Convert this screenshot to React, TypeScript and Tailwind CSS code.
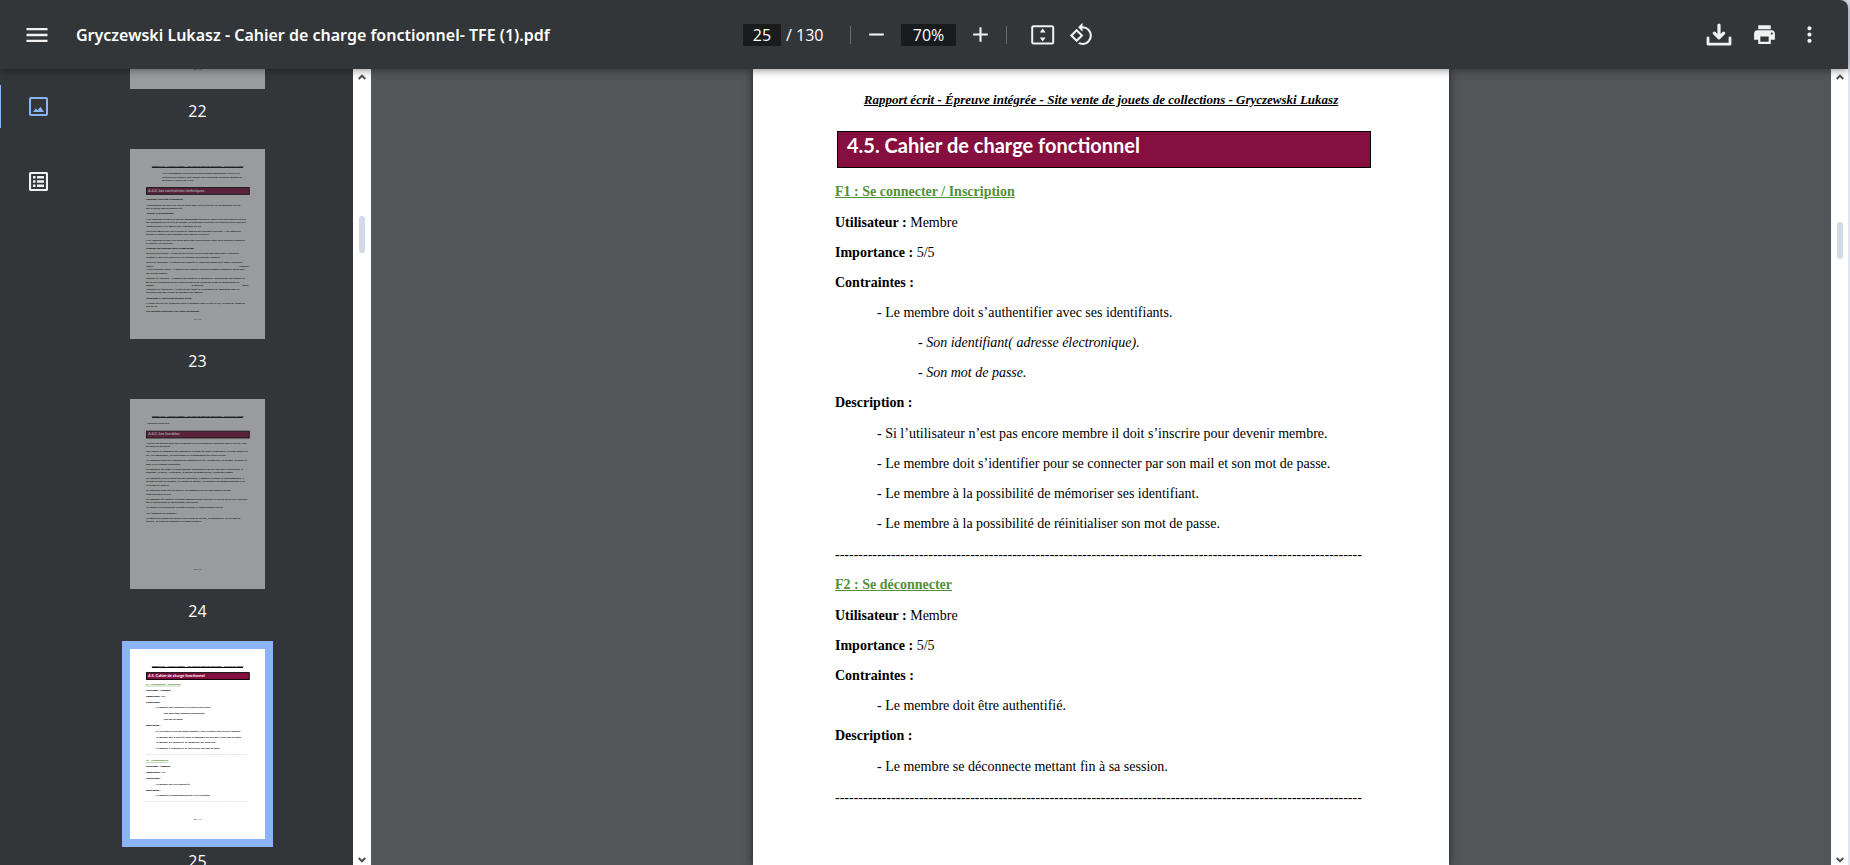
import { MdAdd, MdMenu, MdMoreVert, MdPrint, MdRemove, MdRotate90DegreesCcw } from "react-icons/md";

const RUNNING_HEAD = "Rapport écrit - Épreuve intégrée - Site vente de jouets de collections - Gryczewski Lukasz";
const RULE = "-".repeat(113);

type Feature = {
  title: string;
  constraints: string[];
  details: string[];
  description: string[];
};

const FEATURES: Feature[] = [
  {
    title: "F1 : Se connecter / Inscription",
    constraints: ["- Le membre doit s’authentifier avec ses identifiants."],
    details: ["- Son identifiant( adresse électronique).", "- Son mot de passe."],
    description: [
      "- Si l’utilisateur n’est pas encore membre il doit s’inscrire pour devenir membre.",
      "- Le membre doit s’identifier pour se connecter par son mail et son mot de passe.",
      "- Le membre à la possibilité de mémoriser ses identifiant.",
      "- Le membre à la possibilité de réinitialiser son mot de passe.",
    ],
  },
  {
    title: "F2 : Se déconnecter",
    constraints: ["- Le membre doit être authentifié."],
    details: [],
    description: ["- Le membre se déconnecte mettant fin à sa session."],
  },
];

/* A line of a page preview: x, y, text and an optional style, in page units. */
type Style = "bold" | "green" | "italic" | "end" | "middle";
type Line = [number, number, string, Style?];
type Preview = { number: number; heading?: string; headingY?: number; lines: Line[] };

const PREVIEWS: Preview[] = [
  { number: 22, lines: [] },
  {
    number: 23,
    heading: "4.4.2. Les contraintes techniques",
    headingY: 198,
    lines: [
      [165, 130, "Il est recommandé d'avoir des directives claires concernant la taille et la"],
      [165, 150, "résolution des images, pour garantir une expérience utilisateur optimale et"],
      [165, 166, "uniformité visuelle sur le site."],
      [82, 264, "Héberger votre site e-commerce.", "bold"],
      [82, 294, "L'hébergement de notre site web se trouve chez Infinityfree qui est un hébergeur de site"],
      [82, 310, "php avec une base de données sql."],
      [82, 336, "Assurer la maintenance.", "bold"],
      [82, 366, "Il est important d'établir un plan de maintenance préventive pour éviter pour pouvoir prévoir"],
      [82, 382, "des inspections du site afin de détecter les problèmes avant qu'elles surgissent c'est pour cela"],
      [82, 401, "l'administrateur à un accès à tout l'ensemble du site."],
      [82, 428, "Une planification des interventions en fonction des urgences et criticité. Il est important"],
      [82, 444, "d'établir les critères des problèmes pour pouvoir les régler."],
      [82, 475, "Il est important d'établir des délais clairs pour notre clientèle pour qu'ils puissent s'organiser"],
      [82, 490, "et planifier leur planning."],
      [82, 516, "Proposer des solutions pour le dépannage.", "bold"],
      [82, 542, "Délais d'intervention : Le contrat doit définir un délai maximal dans lequel l'entreprise"],
      [82, 562, "s'engage à intervenir après avoir été informée du problème rencontré."],
      [82, 588, "Délais de réparation : Le contrat doit spécifier le temps maximum dans lequel l'entreprise"],
      [82, 608, "réparer"],
      [614, 608, "l'incident.", "end"],
      [82, 624, "Types d'incident inclus : Le contrat peut spécifier un certain nombre d'incidents inclus dans"],
      [82, 644, "une période donnée."],
      [82, 670, "Montant de l'astreinte : Le contrat doit spécifier le montant de l'astreinte que sera facturé en"],
      [82, 690, "cas de non-respect des délais d'intervention ou de réparation en cas de dépassement du"],
      [82, 706, "nombre"],
      [348, 706, "d'incidents", "middle"],
      [614, 706, "inclus.", "end"],
      [82, 728, "Procédure de facturation : Le contrat doit spécifier la procédure de facturation pour les"],
      [82, 742, "astreintes ainsi que le délai de paiement des factures."],
      [82, 774, "Formation à l'utilisation du back-office.", "bold"],
      [82, 800, "Il faudra prévoir des formations pour le personnel pour utiliser le site, la durée de formation"],
      [82, 815, "sera de 2h."],
      [82, 841, "Les relations utilitaires avec votre site internet", "bold"],
    ],
  },
  {
    number: 24,
    heading: "4.4.3. Les livrables",
    headingY: 165,
    lines: [
      [86, 129, "Templates prédéfinis."],
      [82, 232, "Analyse des besoins détaillant les besoins et les exigences de l'entreprise pour le site de vente"],
      [82, 248, "de jouets de collection."],
      [82, 274, "Doit inclure un document des architecture système qui décrit l'architecture système globale du"],
      [82, 294, "site, les technologies, les plateformes et les composants qui seront utilisés."],
      [82, 320, "Un document détaillant la conception graphique du site, les couleurs, les polices, les mises en"],
      [82, 340, "page et les éléments graphiques."],
      [82, 366, "Un document qui décrit les spécifications fonctionnelles du site ainsi que la navigation, la"],
      [82, 382, "recherche, le panier, le paiement, la gestion de compte client, l'historique d'achat."],
      [82, 413, "Un document avec les spécifications techniques, y compris la langue de programmation, le"],
      [82, 428, "système de base de données, les normes de codage, les protocoles de communications et les"],
      [82, 449, "exigences de sécurité."],
      [82, 475, "Un document décrivant les plans et les procédures de test pour garantir un bon"],
      [82, 495, "fonctionnement du site."],
      [82, 521, "Un document qui spécifie les étapes nécessaires pour déployer le site sur un serveur web ainsi"],
      [82, 537, "que sa maintenance de maintenance, sauvegarde."],
      [82, 562, "Un manuel d'utilisation qui explique au client le fonctionnement du site."],
      [82, 593, "Une formation du personnel."],
      [82, 619, "Un contrat de support qui détaille les niveaux de service, les garanties et les services de"],
      [82, 634, "support, les délais de réponses et les coûts associés."],
    ],
  },
  {
    number: 25,
    heading: "4.5. Cahier de charge fonctionnel",
    headingY: 121,
    lines: [
      [82, 185, "F1 : Se connecter / Inscription", "green"],
      [82, 215, "Utilisateur : Membre", "bold"],
      [82, 246, "Importance : 5/5", "bold"],
      [82, 276, "Contraintes :", "bold"],
      [124, 305, FEATURES[0].constraints[0]],
      [166, 336, FEATURES[0].details[0], "italic"],
      [166, 366, FEATURES[0].details[1], "italic"],
      [82, 396, "Description :", "bold"],
      [124, 427, FEATURES[0].description[0]],
      [124, 457, FEATURES[0].description[1]],
      [124, 487, FEATURES[0].description[2]],
      [124, 518, FEATURES[0].description[3]],
      [82, 548, RULE],
      [82, 578, "F2 : Se déconnecter", "green"],
      [82, 609, "Utilisateur : Membre", "bold"],
      [82, 639, "Importance : 5/5", "bold"],
      [82, 669, "Contraintes :", "bold"],
      [124, 699, FEATURES[1].constraints[0]],
      [82, 730, "Description :", "bold"],
      [124, 760, FEATURES[1].description[0]],
      [82, 790, RULE],
    ],
  },
];

function PagePreview({ preview }: { preview: Preview }) {
  const { number, heading, headingY = 0, lines } = preview;
  return (
    <svg viewBox="0 0 696 980" className="block h-[190px] w-[135px] bg-white font-['Liberation_Serif',serif]" aria-hidden="true">
      {heading && (
        <>
          <text x="348" y="93" fontSize="13" fontWeight="700" fontStyle="italic" textAnchor="middle">{RUNNING_HEAD}</text>
          <rect x="113" y="93" width="470" height="5" />
          <rect x="85" y={headingY + 1} width="530" height="35" fill="#85103f" stroke="#000" strokeWidth="5" />
          <text x="94" y={headingY + 22} fontSize="20" fontWeight="700" fill="#fff" className="font-[Lato,sans-serif]">{heading}</text>
        </>
      )}
      {lines.map(([x, y, text, style]) => {
        const color = style === "green" ? "#548f36" : "#000";
        return (
          <text
            key={`${x}-${y}`}
            x={x}
            y={y}
            fontSize="14"
            fontWeight={style === "bold" || style === "green" ? 700 : 400}
            fontStyle={style === "italic" ? "italic" : "normal"}
            fill={color}
            stroke={color}
            strokeWidth={text === RULE ? 0 : 0.3}
            textDecoration={style === "green" ? "underline" : undefined}
            textAnchor={style === "end" ? "end" : style === "middle" ? "middle" : "start"}
          >
            {text}
          </text>
        );
      })}
      <text x="348" y="882" fontSize="14" textAnchor="middle">{number}/130</text>
    </svg>
  );
}

function Thumbnail({ preview, current }: { preview: Preview; current: boolean }) {
  return (
    <li className="flex h-[250px] shrink-0 flex-col items-center">
      <a href={`#page-${preview.number}`} aria-current={current ? "page" : undefined} className="flex flex-col items-center gap-[12px] text-white">
        <span className={current ? "outline-8 outline-[#8ab4f8]" : "opacity-50"}>
          <PagePreview preview={preview} />
        </span>
        <span className="text-[16px] leading-[20px]">{preview.number}</span>
      </a>
    </li>
  );
}

function Chevron({ down = false }: { down?: boolean }) {
  return (
    <svg viewBox="0 0 8 6" className="h-[6px] w-[8px]" fill="none" stroke="#505050" strokeWidth="2" aria-hidden="true">
      <path d={down ? "M.7 1 4 4.3 7.3 1" : "M.7 5 4 1.7 7.3 5"} />
    </svg>
  );
}

function Scrollbar({ wide = false }: { wide?: boolean }) {
  return (
    <div className={`flex shrink-0 flex-col items-center bg-white pt-[5px] pb-[2px] ${wide ? "w-[18px]" : "w-[17px]"}`}>
      <Chevron />
      <div className={`h-[37px] w-[6px] rounded-full bg-[#d0dbe5] ${wide ? "mt-[136px]" : "mt-[142px]"}`} />
      <div className="mt-auto">
        <Chevron down />
      </div>
    </div>
  );
}

function Toolbar() {
  return (
    <header className="relative z-10 grid h-[69px] shrink-0 grid-cols-[1fr_auto_1fr] items-center rounded-tr-lg bg-[#323639] text-[#f1f1f1] shadow-[0_1px_8px_rgba(0,0,0,0.45)]">
      <div className="flex items-center gap-[25px] pl-[23px]">
        <button type="button" aria-label="Menu"><MdMenu size={28} /></button>
        <h1 className="font-['Noto_Sans',sans-serif] text-[16px] leading-[24px] font-semibold whitespace-nowrap text-white">
          Gryczewski Lukasz - Cahier de charge fonctionnel- TFE (1).pdf
        </h1>
      </div>
      <div className="flex items-center pr-[11px] text-[16px] leading-[22px] text-white">
        <input aria-label="Page" defaultValue="25" className="h-[22px] w-[38px] bg-[#191b1c] text-center" />
        <span className="w-[69px] pl-[5px] whitespace-nowrap">/ 130</span>
        <span className="h-[18px] w-px bg-[#6b6e70]" />
        <button type="button" aria-label="Zoom arrière" className="ml-[13px] text-[#f1f1f1]"><MdRemove size={25} /></button>
        <input aria-label="Zoom" defaultValue="70%" className="ml-[12px] h-[22px] w-[55px] bg-[#191b1c] text-center" />
        <button type="button" aria-label="Zoom avant" className="ml-[12px] text-[#f1f1f1]"><MdAdd size={25} /></button>
        <span className="ml-[13px] h-[18px] w-px bg-[#6b6e70]" />
        <button type="button" aria-label="Ajuster à la page" className="ml-[24px]">
          <svg viewBox="0 0 24 20" className="h-[20px] w-[24px]" aria-hidden="true">
            <rect x="1.2" y="1.2" width="21" height="17.4" rx="1.4" fill="none" stroke="#f1f1f1" strokeWidth="2" />
            <path d="M11.7 3.6 14.6 7.6H8.8zM11.7 16.4 8.8 12.4h5.8z" fill="#f1f1f1" />
          </svg>
        </button>
        <button type="button" aria-label="Faire pivoter" className="ml-[14px] text-[#f1f1f1]"><MdRotate90DegreesCcw size={25} /></button>
      </div>
      <div className="flex items-center justify-end gap-[20px] pr-[26px]">
        <button type="button" aria-label="Télécharger">
          <svg viewBox="0 0 26 24" className="h-[24px] w-[26px]" fill="none" stroke="#f1f1f1" strokeLinecap="round" strokeLinejoin="round" aria-hidden="true">
            <path d="M13 2v12.500M8.300 10.200 13 14.900l4.700-4.700" strokeWidth="3.2" />
            <path d="M2 15v6.200h22V15" strokeWidth="2.8" />
          </svg>
        </button>
        <button type="button" aria-label="Imprimer"><MdPrint size={25} /></button>
        <button type="button" aria-label="Plus"><MdMoreVert size={25} /></button>
      </div>
    </header>
  );
}

function Sidebar() {
  return (
    <aside className="flex shrink-0 bg-[#323639]">
      <nav className="flex w-[76px] flex-col pt-[16px]" aria-label="Panneaux">
        <button type="button" aria-label="Miniatures" className="flex h-[43px] items-center border-l border-[#8ab4f8] pl-[28px]">
          <svg viewBox="0 0 19 19" className="h-[19px] w-[19px]" aria-hidden="true">
            <rect x="1" y="1" width="17" height="17" rx="1" fill="none" stroke="#8ab4f8" strokeWidth="2" />
            <path d="M4 15 6.800 11.200 8.600 13.200 11.500 9.700 15 15z" fill="#8ab4f8" />
          </svg>
        </button>
        <button type="button" aria-label="Plan du document" className="mt-[32px] flex h-[43px] items-center pl-[29px]">
          <svg viewBox="0 0 19 19" className="h-[19px] w-[19px]" fill="#f1f1f1" aria-hidden="true">
            <rect x="1" y="1" width="17" height="17" rx="1" fill="none" stroke="#f1f1f1" strokeWidth="2.2" />
            <path d="M4 4h2.500v2.500H4zM8 4h7v2.500H8zM4 8.200h2.500v2.500H4zM8 8.200h7v2.500H8zM4 12.500h2.500V15H4zM8 12.500h7V15H8z" />
          </svg>
        </button>
      </nav>
      <ol className="-mt-[170px] flex w-[243px] flex-col">
        {PREVIEWS.map((preview) => (
          <Thumbnail key={preview.number} preview={preview} current={preview.number === 25} />
        ))}
      </ol>
      <div className="w-[34px]" />
    </aside>
  );
}

function Field({ label, value }: { label: string; value?: string }) {
  return (
    <p>
      <b>{label} :</b> {value}
    </p>
  );
}

function FeatureSection({ feature }: { feature: Feature }) {
  return (
    <section>
      <h3 className="font-bold text-[#548f36] underline">{feature.title}</h3>
      <div className="mt-px">
        <Field label="Utilisateur" value="Membre" />
        <Field label="Importance" value="5/5" />
        <Field label="Contraintes" />
      </div>
      <ul className="pl-[42px]">
        {feature.constraints.map((text) => <li key={text}>{text}</li>)}
        {feature.details.map((text) => <li key={text} className="pl-[41px] italic">{text}</li>)}
      </ul>
      <Field label="Description" />
      <ul className="mt-px pl-[42px]">
        {feature.description.map((text) => <li key={text}>{text}</li>)}
      </ul>
      <p className="mt-px whitespace-nowrap" aria-hidden="true">{RULE}</p>
    </section>
  );
}

function DocumentPage() {
  return (
    <article id="page-25" className="w-[696px] shrink-0 bg-white px-[82px] pt-[16px] font-['Liberation_Serif',serif] text-[14px] leading-[30px] text-black shadow-[0_0_8px_rgba(0,0,0,0.6)]">
      <p className="text-center text-[13px] font-bold whitespace-nowrap italic underline">{RUNNING_HEAD}</p>
      <h2 className="mt-[16px] mr-[-4px] ml-[2px] h-[37px] border border-black bg-[#85103f] pl-[9px] font-[Lato,sans-serif] text-[20px] leading-[27px] font-bold text-white">
        4.5. Cahier de charge fonctionnel
      </h2>
      <div className="mt-[9px]">
        {FEATURES.map((feature) => <FeatureSection key={feature.title} feature={feature} />)}
      </div>
    </article>
  );
}

export default function App() {
  return (
    <div className="h-screen overflow-hidden bg-[#dde5f2] pr-[2px] font-['Open_Sans',sans-serif]">
      <div className="flex h-full flex-col">
        <Toolbar />
        <div className="flex min-h-0 flex-1 overflow-hidden">
          <Sidebar />
          <Scrollbar wide />
          <main className="flex min-w-0 flex-1 justify-center overflow-hidden bg-[#525659]">
            <DocumentPage />
          </main>
          <Scrollbar />
        </div>
      </div>
    </div>
  );
}
